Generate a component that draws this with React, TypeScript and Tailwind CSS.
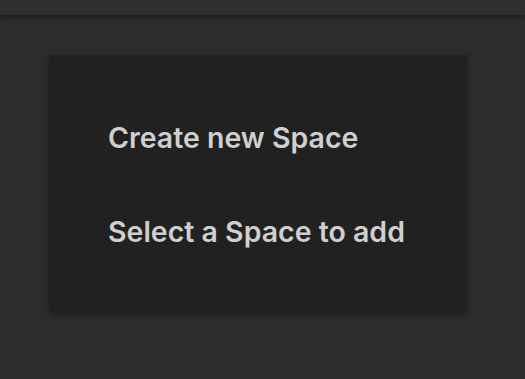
export default function App() {
    return (
        <div className="w-[525px] h-[379px] bg-[#2d2d2d] overflow-hidden" style={{ fontFamily: 'Inter, "Noto Sans", sans-serif' }}>
            <div className="h-[15px] bg-[#2f2f2f] shadow-[0_2px_5px_rgba(0,0,0,0.45)]"></div>
            <div className="pl-[49px] pt-[40px]">
                <div className="w-[418px] h-[257px] bg-[#212121] pt-[36px] pl-[59px] flex flex-col shadow-[0_3px_8px_rgba(0,0,0,0.35)]">
                    <div className="h-[94px] flex items-center text-[28.5px] font-semibold text-[#cfcfcf]">Create new Space</div>
                    <div className="h-[94px] flex items-center text-[28.5px] font-semibold text-[#cfcfcf]">Select a Space to add</div>
                </div>
            </div>
        </div>
    );
}
